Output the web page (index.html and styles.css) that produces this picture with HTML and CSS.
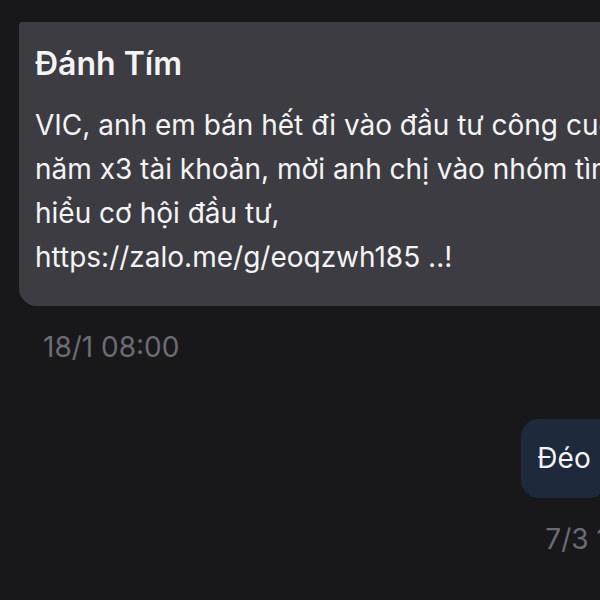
FILE: index.html
```html
<!DOCTYPE html>
<html lang="vi">
<head>
<meta charset="utf-8">
<link rel="stylesheet" href="styles.css">
</head>
<body>
<div class="stage">
  <div class="msg msg-in">
    <div class="bubble bubble-in">
      <div class="sender">Đánh Tím</div>
      <div class="text">VIC, anh em bán hết đi vào đầu tư công cuộc<br>năm x3 tài khoản, mời anh chị vào nhóm tìm<br>hiểu cơ hội đầu tư,<br>https://zalo.me/g/eoqzwh185 ..!</div>
    </div>
    <div class="time time-in">18/1 08:00</div>
  </div>
  <div class="msg msg-out">
    <div class="bubble bubble-out">
      <div class="text">Đéo</div>
    </div>
    <div class="time time-out">7/3 10:15</div>
  </div>
</div>
</body>
</html>
```
FILE: styles.css
```css
html, body {
  margin: 0;
  padding: 0;
  background: #18181b;
  overflow: hidden;
}
.stage {
  width: 700px;
  padding: 22px 0 0 19px;
  font-family: Inter, "Noto Sans", sans-serif;
  display: flex;
  flex-direction: column;
}
.msg {
  display: flex;
  flex-direction: column;
  align-items: flex-start;
}
.msg-in {
  align-self: stretch;
}
.msg-out {
  align-self: flex-end;
  margin-top: 55px;
  margin-right: 57px;
}
.bubble {
  box-sizing: border-box;
}
.bubble-in {
  width: 680px;
  background: #3c3c42;
  border-radius: 3px 18px 18px 18px;
  padding: 20px 16px 27px 16px;
  color: #f4f4f5;
}
.sender {
  font-size: 32px;
  font-weight: 600;
  line-height: 44px;
  margin-bottom: 17px;
}
.text {
  font-size: 28px;
  line-height: 44px;
  white-space: nowrap;
}
.bubble-out {
  background: #1e293b;
  border-radius: 18px 3px 18px 18px;
  padding: 17px 16px 18px 16px;
  color: #f4f4f5;
}
.time {
  font-size: 28px;
  color: #6b6b73;
  line-height: 34px;
  margin: 24px 0 0 24px;
  white-space: nowrap;
}
```
